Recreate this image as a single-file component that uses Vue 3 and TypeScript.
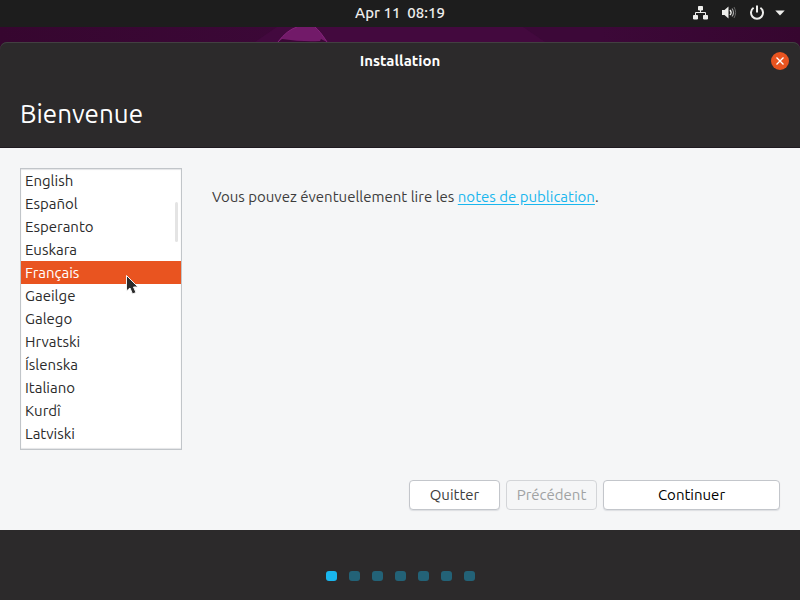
<script setup lang="ts">
import { ref } from 'vue'

const languages: string[] = [
  'English',
  'Español',
  'Esperanto',
  'Euskara',
  'Français',
  'Gaeilge',
  'Galego',
  'Hrvatski',
  'Íslenska',
  'Italiano',
  'Kurdî',
  'Latviski',
]
const selected = ref<string>('Français')
const stepCount = 7
const currentStep = 1
</script>

<template>
  <div class="desktop">
    <header class="topbar">
      <time class="clock">Apr 11&nbsp; 08:19</time>
      <div class="indicators">
        <div class="tray">
          <svg class="icon" width="16" height="16" viewBox="0 0 16 16" aria-hidden="true">
            <path d="M5.500 1.500h4v3.500h-4zM.500 10.500h4V14h-4zM10.500 10.500h4V14h-4z" fill="#eeeeec" stroke="#eeeeec" stroke-linejoin="round" />
            <path d="M7.500 5v3M2.500 10.500V7.500h10v3" fill="none" stroke="#eeeeec" />
          </svg>
          <svg class="icon" width="16" height="16" viewBox="0 0 16 16" aria-hidden="true">
            <path d="M1 5h2.500L7.500 1.500v12L3.500 10H1z" fill="#eeeeec" />
            <path d="M9 5q2.200 2.500 0 5" fill="none" stroke="#eeeeec" stroke-width="1.400" />
            <path d="M11 3.500q3 4 0 8" fill="none" stroke="#a5a5a5" stroke-width="1.200" />
            <path d="M13 2q3.200 5.500 0 11" fill="none" stroke="#666" stroke-width="1" />
          </svg>
          <svg class="icon" width="16" height="16" viewBox="0 0 16 16" aria-hidden="true">
            <path d="M4.600 2.800a6 6 0 1 0 6.800 0M8 .500v7" fill="none" stroke="#eeeeec" stroke-width="2" />
          </svg>
        </div>
        <svg class="arrow" width="10" height="6" viewBox="0 0 10 6" aria-hidden="true">
          <path d="M.3.500h9.400L5 5.500z" fill="#eeeeec" />
        </svg>
      </div>
    </header>

    <div class="wallpaper">
      <svg class="mascot" width="290" height="15" viewBox="0 0 290 15" aria-hidden="true">
        <path d="M22 0H268L290 15H0z" fill="#460a42" opacity=".7" />
        <path d="M23 15Q32 3 42 0H60Q65 4 72 15z" fill="#721a69" />
        <path d="M23 15L27 12Q47 15 65 14L66 12L72 15z" fill="#3a0735" />
        <path d="M23 15Q32 3 42 0M60 0Q65 4 72 15" fill="none" stroke="#85247b" />
      </svg>
    </div>

    <main class="window">
      <div class="titlebar">
        <span class="title">Installation</span>
        <button class="close" type="button" aria-label="Fermer">
          <svg width="8" height="8" viewBox="0 0 8 8" aria-hidden="true">
            <path d="M.5.500l7 7M7.500.500l-7 7" stroke="#fff" stroke-width="1.400" />
          </svg>
        </button>
      </div>
      <h1 class="heading">Bienvenue</h1>

      <section class="page">
        <div class="content">
          <div class="list" role="radiogroup" aria-label="Langue">
            <label
              v-for="language in languages"
              :key="language"
              class="row"
              :class="{ active: language === selected }"
            >
              <input v-model="selected" class="radio" type="radio" name="language" :value="language" />
              {{ language }}
            </label>
            <span class="thumb"></span>
            <svg class="pointer" width="14" height="20" viewBox="0 0 14 20" aria-hidden="true">
              <path d="M.500.500v15.500l3.500-3 2.500 6 3.500-1.500-2.500-5.500H12z" fill="#2b2b2b" stroke="#f4f4f4" />
            </svg>
          </div>
          <p class="notes">Vous pouvez éventuellement lire les <a href="#notes">notes de publication</a>.</p>
        </div>
        <div class="actions">
          <button class="btn" type="button">Quitter</button>
          <button class="btn" type="button" disabled>Précédent</button>
          <button class="btn primary" type="button">Continuer</button>
        </div>
      </section>

      <footer class="steps">
        <span v-for="step in stepCount" :key="step" class="dot" :class="{ current: step === currentStep }"></span>
      </footer>
    </main>
  </div>
</template>

<style>
body {
  margin: 0;
  background: #2c2a2b;
}
</style>

<style scoped>
.desktop {
  display: flex;
  flex-direction: column;
  min-height: 100vh;
  background: #36062f;
  font-family: Ubuntu, "Noto Sans", sans-serif;
  font-size: 15px;
  line-height: 20px;
  color: #3d3d3d;
}
.topbar {
  display: grid;
  grid-template-columns: 1fr auto 1fr;
  align-items: center;
  box-sizing: border-box;
  height: 27px;
  padding-bottom: 1px;
  background: #1d1d1d;
  color: #eeeeec;
}
.clock {
  grid-column: 2;
  font-weight: 500;
}
.indicators {
  display: flex;
  align-items: center;
  justify-content: flex-end;
  gap: 10px;
  padding-right: 15px;
}
.tray {
  display: flex;
  gap: 12px;
}
.icon,
.arrow {
  display: block;
}
.wallpaper {
  display: flex;
  justify-content: center;
  height: 15px;
  background: linear-gradient(90deg, #36062f, #3c0838 40%, #3c0838 75%, #36062f);
}
.mascot {
  display: block;
}
.window {
  display: flex;
  flex: 1;
  flex-direction: column;
  background: #2c2a2b;
  border-radius: 7px 7px 0 0;
  box-shadow: inset 0 1px #424041;
}
.titlebar {
  display: grid;
  grid-template-columns: 1fr auto 1fr;
  align-items: center;
  height: 38px;
  padding: 0 11px;
}
.title {
  grid-column: 2;
  color: #fff;
  font-weight: 700;
}
.close {
  display: flex;
  align-items: center;
  justify-content: center;
  justify-self: end;
  width: 18px;
  height: 18px;
  padding: 0;
  border: 0;
  border-radius: 50%;
  background: #e95420;
}
.heading {
  margin: 0;
  padding: 15px 20px 14px;
  border-bottom: 1px solid #1f1a20;
  color: #fff;
  font-size: 26px;
  font-weight: 400;
  line-height: 38px;
}
.page {
  display: flex;
  flex: 1;
  flex-direction: column;
  justify-content: space-between;
  gap: 30px;
  padding: 20px;
  background: #f5f6f7;
}
.content {
  display: flex;
  gap: 30px;
}
.list {
  position: relative;
  flex: none;
  box-sizing: border-box;
  width: 162px;
  padding-bottom: 4px;
  border: 1px solid #c1c5c9;
  background: #fff;
  box-shadow: inset 0 1px 1px #e4e5e7, inset 0 -1px 1px #e4e5e7;
  color: #2b2b2b;
}
.row {
  display: block;
  padding: 0 4px;
  line-height: 23px;
}
.row.active {
  background: #e95420;
  color: #fff;
}
.radio {
  position: absolute;
  margin: 0;
  opacity: 0;
  pointer-events: none;
}
.thumb {
  position: absolute;
  top: 33px;
  right: 3px;
  width: 3px;
  height: 40px;
  border-radius: 2px;
  background: #e4e4e4;
}
.pointer {
  position: absolute;
  top: 106px;
  left: 105px;
}
.notes {
  margin: 0;
  padding-top: 19px;
}
.notes a {
  color: #19b6ee;
  text-underline-offset: 2px;
}
.actions {
  display: flex;
  justify-content: flex-end;
  gap: 6px;
}
.btn {
  box-sizing: border-box;
  width: 91px;
  height: 30px;
  padding: 0;
  border: 1px solid #c3c6cb;
  border-radius: 4px;
  background: #fff;
  box-shadow: 0 1px 1px #dddfe2;
  color: #3d3d3d;
  font: inherit;
}
.btn:disabled {
  border-color: #d3d5d8;
  background: #f5f6f7;
  box-shadow: none;
  color: #a0a2a3;
}
.btn.primary {
  width: 177px;
  color: #000;
}
.steps {
  display: flex;
  align-items: center;
  justify-content: center;
  gap: 12px;
  padding: 41px 0 19px;
}
.dot {
  width: 11px;
  height: 10px;
  border-radius: 3px;
  background: #236277;
}
.dot.current {
  background: #19b6ee;
}
</style>
